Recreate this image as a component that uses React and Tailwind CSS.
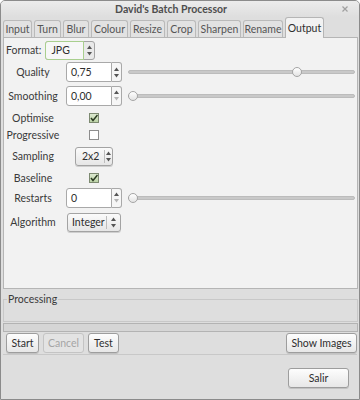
import React from 'react';

const tabs = [
  { name: 'Input', w: 'w-[29px]' },
  { name: 'Turn', w: 'w-[27px]' },
  { name: 'Blur', w: 'w-[26px]' },
  { name: 'Colour', w: 'w-[37px]' },
  { name: 'Resize', w: 'w-[35px]' },
  { name: 'Crop', w: 'w-[29px]' },
  { name: 'Sharpen', w: 'w-[43px]' },
  { name: 'Rename', w: 'w-[40px]' },
];

function Arrows({ downOff }) {
  return (
    <svg width="5" height="11" viewBox="0 0 5 11">
      <path d="M0 4 L2.5 0.5 L5 4 Z" fill="#555555" />
      <path d="M0 7 L2.5 10.5 L5 7 Z" fill={downOff ? '#b4b4b4' : '#555555'} />
    </svg>
  );
}

function SpinBox({ value, downOff }) {
  return (
    <div className="flex h-[20px] w-[56px]">
      <div className="flex flex-1 items-center rounded-l-[3px] border border-[#a9a9a9] bg-white pl-[4px] text-[#2e2e2e]">
        {value}
      </div>
      <div className="flex w-[10px] items-center justify-center rounded-r-[3px] border border-l-0 border-[#a9a9a9] bg-[#f6f6f6]">
        <Arrows downOff={downOff} />
      </div>
    </div>
  );
}

function Combo({ value, w, text }) {
  return (
    <div className={`flex h-[19px] items-center rounded-[3px] border border-[#a3a3a3] bg-gradient-to-b from-[#fbfbfb] to-[#e6e6e6] shadow-[0_1px_0_#cfcfcf] ${w}`}>
      <div className={`text-[#2e2e2e] ${text}`}>{value}</div>
      <div className="h-[13px] border-l border-[#bdbdbd]" />
      <div className="flex flex-1 justify-center">
        <Arrows />
      </div>
    </div>
  );
}

function Check({ on }) {
  return on ? (
    <div className="flex h-[10px] w-[10px] items-center justify-center border border-[#7d8a71] bg-gradient-to-b from-[#dbe8cf] to-[#bcd3a6]">
      <svg width="8" height="8" viewBox="0 0 8 8">
        <path d="M1 4 L3 6.5 L7.5 1" stroke="#2b3a22" strokeWidth="1.5" fill="none" />
      </svg>
    </div>
  ) : (
    <div className="h-[10px] w-[10px] border border-[#8d8d8d] bg-white" />
  );
}

function Slider({ pos }) {
  return (
    <div className="relative ml-[2px] mr-[2px] h-[10px]">
      <div className="absolute left-0 right-0 top-[3px] h-[4px] rounded-full border border-[#bcbcbc] bg-[#c9c9c9]" />
      <div
        className="absolute top-0 h-[10px] w-[10px] rounded-full border border-[#a5a5a5] bg-gradient-to-b from-white to-[#e4e4e4]"
        style={{ left: pos }}
      />
    </div>
  );
}

function Row({ h, label, children, slider }) {
  return (
    <div className={`grid grid-cols-[58px_64px_1fr] items-center ${h}`}>
      <div className="text-center text-[#3a3a3a]">{label}</div>
      <div className="flex justify-center">{children}</div>
      <div>{slider}</div>
    </div>
  );
}

function Button({ children, w, off }) {
  return (
    <div
      className={`flex h-[20px] items-center justify-center rounded-[3px] border ${w} ${
        off
          ? 'border-[#c4c4c4] bg-[#e3e3e3] text-[#a5a5a5]'
          : 'border-[#9d9d9d] bg-gradient-to-b from-[#fdfdfd] to-[#e7e7e7] text-[#2e2e2e] shadow-[0_1px_0_#c2c2c2]'
      }`}
    >
      {children}
    </div>
  );
}

export default function App() {
  return (
    <div className="flex h-[400px] w-[360px] flex-col overflow-hidden rounded-t-[5px] border border-[#8b8b8b] bg-[#dedede] font-['Lato',sans-serif] text-[10.5px] leading-[14px] text-[#3a3a3a]">
      {/* Title bar */}
      <div className="flex h-[16px] items-center bg-gradient-to-b from-[#ececec] to-[#dedede]">
        <div className="w-[340px] text-center font-bold text-[#4e4e4e]">David's Batch Processor</div>
        <svg width="6" height="6" viewBox="0 0 6 6" className="ml-[1px]">
          <path d="M0.5 0.5 L5.5 5.5 M5.5 0.5 L0.5 5.5" stroke="#a0a0a0" strokeWidth="1.2" />
        </svg>
      </div>

      {/* Tabs */}
      <div className="flex h-[20px] items-end gap-[2px] pl-[2px]">
        {tabs.map(t => (
          <div
            key={t.name}
            className={`flex h-[17px] items-center justify-center rounded-t-[3px] border border-b-0 border-[#bababa] bg-[#e2e2e2] text-[#555] ${t.w}`}
          >
            {t.name}
          </div>
        ))}
        <div className="relative z-10 -mb-px flex h-[21px] w-[39px] items-center justify-center rounded-t-[3px] border border-b-0 border-[#b5b5b5] bg-[#f2f2f2] text-[#2e2e2e]">
          Output
        </div>
      </div>

      {/* Output page */}
      <div className="ml-[2px] h-[252px] w-[355px] border border-[#b5b5b5] bg-[#f2f2f2] pt-[2px]">
        <div className="flex h-[20px] items-center pl-[2px]">
          <span className="text-[#3a3a3a]">Format:</span>
          <div className="ml-[4px] flex h-[19px] w-[50px] items-center rounded-[3px] border border-[#a3a3a3] bg-[#e9e9e9]">
            <div className="-my-px -ml-px flex h-[19px] w-[39px] items-center rounded-l-[3px] border border-[#a9cf8e] bg-[#f7f7f7] pl-[5px] text-[#2e2e2e]">
              JPG
            </div>
            <div className="flex flex-1 justify-center">
              <Arrows />
            </div>
          </div>
        </div>

        <Row h="h-[24px]" label="Quality" slider={<Slider pos={164} />}>
          <SpinBox value="0,75" />
        </Row>
        <Row h="h-[23px]" label="Smoothing" slider={<Slider pos={0} />}>
          <SpinBox value="0,00" downOff />
        </Row>
        <Row h="h-[21px]" label="Optimise">
          <Check on />
        </Row>
        <Row h="h-[14px]" label="Progressive">
          <Check />
        </Row>
        <Row h="h-[28px]" label="Sampling">
          <Combo value="2x2" w="w-[38px]" text="w-[28px] pl-[6px]" />
        </Row>
        <Row h="h-[15px]" label="Baseline">
          <Check on />
        </Row>
        <Row h="h-[25px]" label="Restarts" slider={<Slider pos={0} />}>
          <SpinBox value="0" downOff />
        </Row>
        <Row h="h-[24px]" label="Algorithm">
          <Combo value="Integer" w="w-[54px]" text="w-[38px] pl-[4px]" />
        </Row>
      </div>

      {/* Processing frame */}
      <fieldset className="ml-[2px] mt-[4px] h-[29px] w-[355px] border border-[#c8c8c8]">
        <legend className="ml-[3px] px-[1px] leading-[12px] text-[#3a3a3a]">Processing</legend>
      </fieldset>

      <div className="ml-[2px] mt-[1px] h-[9px] w-[355px] border border-[#b3b3b3] bg-[#d6d6d6]" />

      <div className="mt-[1px] flex items-center pl-[5px] pr-[2px]">
        <div className="flex gap-[4px]">
          <Button w="w-[33px]">Start</Button>
          <Button w="w-[41px]" off>Cancel</Button>
          <Button w="w-[31px]">Test</Button>
        </div>
        <div className="ml-auto">
          <Button w="w-[71px]">Show Images</Button>
        </div>
      </div>

      <div className="mx-[2px] mt-[1px] border-t border-[#c8c8c8]" />

      <div className="mt-[13px] flex justify-end pr-[10px]">
        <Button w="w-[61px]">Salir</Button>
      </div>
    </div>
  );
}
